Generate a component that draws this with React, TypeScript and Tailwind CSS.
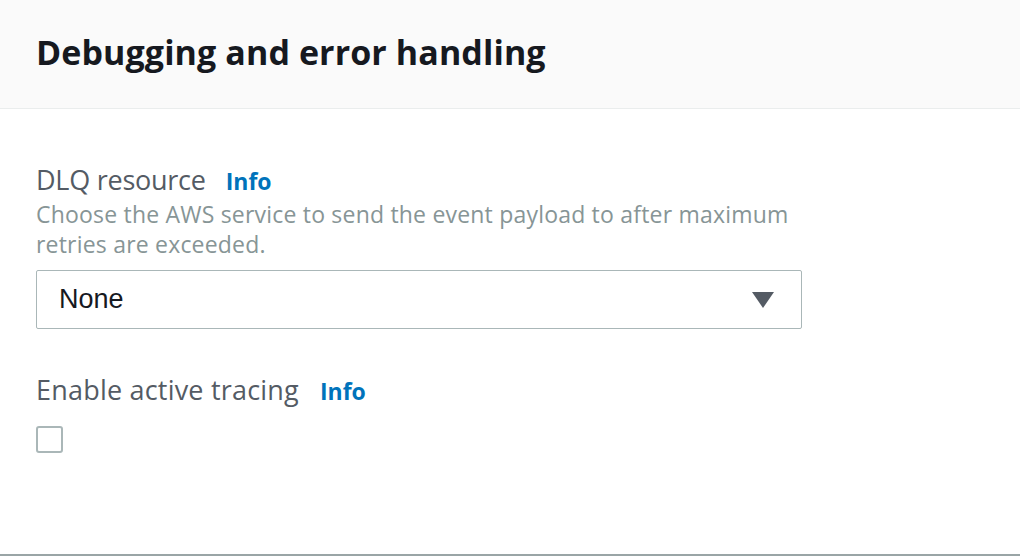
import React from "react";

export default function App() {
  return (
    <div
      className="w-[1020px] h-[556px] bg-white flex flex-col border-b-2 border-[#9aa5a6] overflow-hidden"
      style={{ fontFamily: '"Open Sans", "Noto Sans", sans-serif' }}
    >
      <div className="h-[109px] shrink-0 bg-[#fafafa] border-b border-[#eaeded] px-[36px] flex items-center">
        <h2 className="text-[34px] leading-[40px] font-bold text-[#16191f] tracking-[0.1px] pb-[4px]">
          Debugging and error handling
        </h2>
      </div>
      <div className="px-[36px] pt-[52px] flex flex-col">
        <div className="flex items-baseline gap-[20px]">
          <span className="text-[27px] leading-[38px] text-[#545b64] tracking-[-0.25px]">DLQ resource</span>
          <span className="text-[23px] font-bold text-[#0073bb]">Info</span>
        </div>
        <p className="text-[23px] leading-[30px] text-[#879596] tracking-[0.2px] w-[780px]">
          Choose the AWS service to send the event payload to after maximum retries are exceeded.
        </p>
        <div className="mt-[11px] w-[766px] h-[59px] border border-[#aab7b8] rounded-[2px] flex items-center justify-between pl-[22px] pr-[27px]">
          <span
            className="text-[27px] text-[#16191f]"
            style={{ fontFamily: '"Liberation Sans", Arial, sans-serif' }}
          >
            None
          </span>
          <svg width="22" height="16" viewBox="0 0 22 16">
            <polygon points="0,0 22,0 11,16" fill="#545b64" />
          </svg>
        </div>
        <div className="flex items-baseline gap-[21px] mt-[42px]">
          <span className="text-[27px] leading-[38px] text-[#545b64] tracking-[0.2px]">Enable active tracing</span>
          <span className="text-[23px] font-bold text-[#0073bb]">Info</span>
        </div>
        <div className="mt-[17px] w-[27px] h-[27px] border-2 border-[#aab7b8] rounded-[3px] bg-white" />
      </div>
    </div>
  );
}
